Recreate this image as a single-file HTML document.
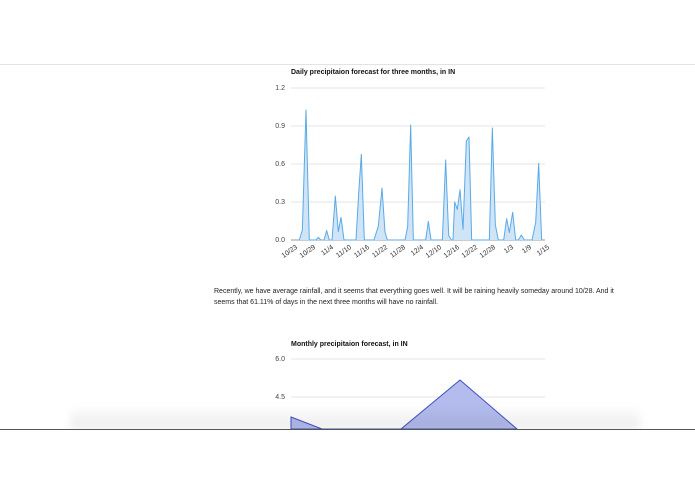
<!DOCTYPE html>
<html><head><style>
html,body{margin:0;padding:0;background:#fff;width:695px;height:494px;overflow:hidden;position:relative;font-family:"Liberation Sans",Arial,sans-serif}
.abs{position:absolute}
.t{font-weight:bold;font-size:7px;color:#111;white-space:nowrap}
.y{font-size:7px;color:#444;text-align:right;width:20px}
.xl{font-size:7px;color:#333;transform:rotate(-35deg);transform-origin:right top;white-space:nowrap;text-align:right;width:30px}
.p{font-size:7px;color:#222;white-space:nowrap;line-height:11px}
</style></head><body>
<div class="abs" style="left:0;top:64px;width:695px;height:1px;background:#e3e3e3"></div>
<div class="abs t" style="left:291px;top:69px">Daily precipitaion forecast for three months, in IN</div>
<div class="abs y" style="left:265px;top:85px">1.2</div>
<div class="abs y" style="left:265px;top:123px">0.9</div>
<div class="abs y" style="left:265px;top:161px">0.6</div>
<div class="abs y" style="left:265px;top:199px">0.3</div>
<div class="abs y" style="left:265px;top:237px">0.0</div>
<svg class="abs" style="left:270px;top:60px" width="290" height="200" viewBox="0 0 870 600">
<g stroke="#e6e6e6" stroke-width="3"><line x1="63" y1="84" x2="825" y2="84"/><line x1="63" y1="198" x2="825" y2="198"/><line x1="63" y1="312" x2="825" y2="312"/><line x1="63" y1="426" x2="825" y2="426"/></g>
<line x1="63" y1="540" x2="825" y2="540" stroke="#999" stroke-width="3"/>
<polyline fill="#cfe4f7" stroke="#5aaae6" stroke-width="3" stroke-linejoin="round" points="88,540 97,510 108,150 118,540 138,540 145,532 152,540 162,540 170,512 178,540 186,540 196,408 205,515 213,472 222,540 258,540 266,400 274,283 283,540 312,540 325,498 336,384 345,516 352,540 405,540 413,500 422,195 430,540 467,540 475,484 483,540 517,540 527,300 536,526 544,540 549,540 554,426 562,448 570,389 579,508 589,243 597,231 605,540 658,540 667,204 676,494 685,540 701,540 710,476 718,518 728,457 737,540 745,540 754,525 763,540 786,540 797,488 806,310 815,540"/>
</svg>
<div class="abs xl" style="left:265px;top:244px">10/23</div>
<div class="abs xl" style="left:283px;top:244px">10/29</div>
<div class="abs xl" style="left:301px;top:244px">11/4</div>
<div class="abs xl" style="left:319px;top:244px">11/10</div>
<div class="abs xl" style="left:337px;top:244px">11/16</div>
<div class="abs xl" style="left:355px;top:244px">11/22</div>
<div class="abs xl" style="left:373px;top:244px">11/28</div>
<div class="abs xl" style="left:391px;top:244px">12/4</div>
<div class="abs xl" style="left:409px;top:244px">12/10</div>
<div class="abs xl" style="left:427px;top:244px">12/16</div>
<div class="abs xl" style="left:445px;top:244px">12/22</div>
<div class="abs xl" style="left:463px;top:244px">12/28</div>
<div class="abs xl" style="left:481px;top:244px">1/3</div>
<div class="abs xl" style="left:499px;top:244px">1/9</div>
<div class="abs xl" style="left:517px;top:244px">1/15</div>
<div class="abs p" style="left:214px;top:286px">Recently, we have average rainfall, and it seems that everything goes well. It will be raining heavily someday around 10/28. And it<br>seems that 61.11% of days in the next three months will have no rainfall.</div>
<div class="abs t" style="left:291px;top:341px">Monthly precipitaion forecast, in IN</div>
<div class="abs y" style="left:265px;top:356px">6.0</div>
<div class="abs y" style="left:265px;top:394px">4.5</div>
<svg class="abs" style="left:0;top:350px" width="695" height="80">
<line x1="291" y1="9" x2="545" y2="9" stroke="#e6e6e6"/>
<line x1="291" y1="47" x2="545" y2="47" stroke="#e6e6e6"/>
<polygon fill="#b4bcee" stroke="#3f4fc2" stroke-width="1" points="291,67 322,79 401,79 460,30 517,79 291,79"/>
</svg>
<div class="abs" style="left:70px;top:405px;width:570px;height:24px;background:linear-gradient(rgba(0,0,0,0),rgba(0,0,0,0.08));filter:blur(4px)"></div>
<div class="abs" style="left:0;top:429px;width:695px;height:65px;background:#fff"></div>
<div class="abs" style="left:0;top:429px;width:695px;height:1px;background:#555"></div>
</body></html>
